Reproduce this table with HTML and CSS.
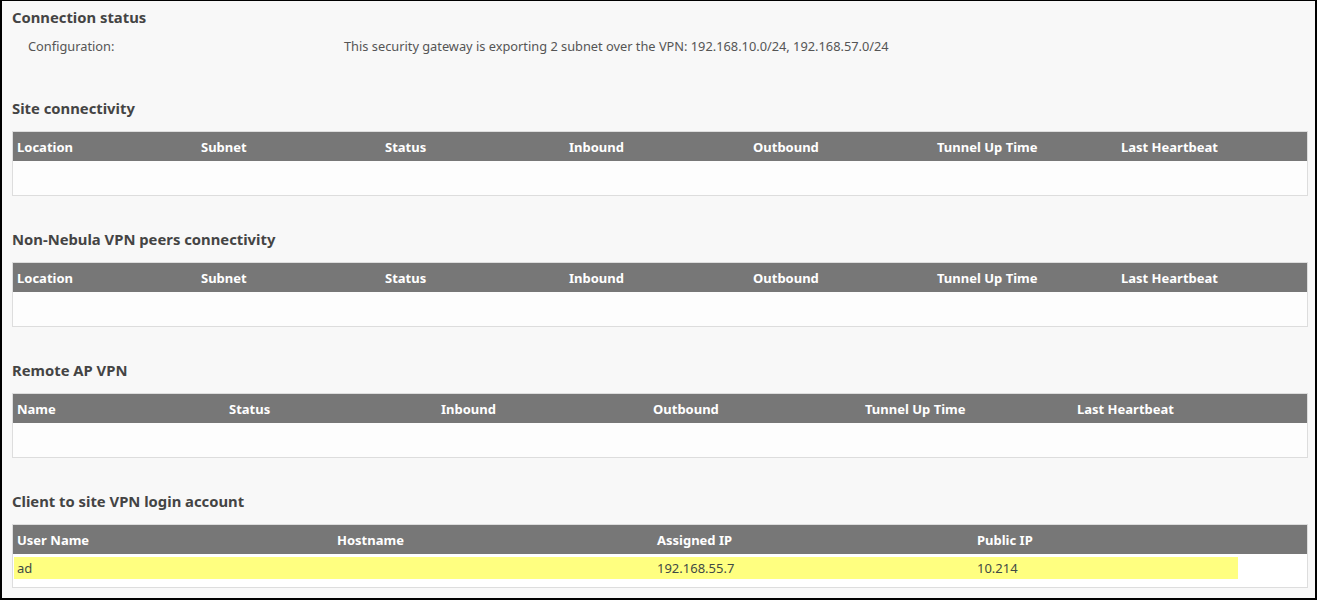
FILE: index.html
```html
<!DOCTYPE html>
<html>
<head>
<meta charset="utf-8">
<link rel="stylesheet" href="styles.css">
</head>
<body>
<div class="page">
  <section class="sec first">
    <h2 class="title">Connection status</h2>
    <div class="config">
      <span class="label">Configuration:</span>
      <span class="value">This security gateway is exporting 2 subnet over the VPN: 192.168.10.0/24, 192.168.57.0/24</span>
    </div>
  </section>

  <section class="sec">
    <h2 class="title">Site connectivity</h2>
    <div class="tbl">
      <div class="thead cols7">
        <span>Location</span><span>Subnet</span><span>Status</span><span>Inbound</span><span>Outbound</span><span>Tunnel Up Time</span><span>Last Heartbeat</span>
      </div>
      <div class="tbody empty"></div>
    </div>
  </section>

  <section class="sec">
    <h2 class="title">Non-Nebula VPN peers connectivity</h2>
    <div class="tbl">
      <div class="thead cols7">
        <span>Location</span><span>Subnet</span><span>Status</span><span>Inbound</span><span>Outbound</span><span>Tunnel Up Time</span><span>Last Heartbeat</span>
      </div>
      <div class="tbody empty"></div>
    </div>
  </section>

  <section class="sec">
    <h2 class="title">Remote AP VPN</h2>
    <div class="tbl">
      <div class="thead cols6">
        <span>Name</span><span>Status</span><span>Inbound</span><span>Outbound</span><span>Tunnel Up Time</span><span>Last Heartbeat</span>
      </div>
      <div class="tbody empty"></div>
    </div>
  </section>

  <section class="sec last">
    <h2 class="title">Client to site VPN login account</h2>
    <div class="tbl">
      <div class="thead cols4">
        <span>User Name</span><span>Hostname</span><span>Assigned IP</span><span>Public IP</span>
      </div>
      <div class="tbody rows">
        <div class="row hl cols4">
          <span>ad</span><span></span><span>192.168.55.7</span><span>10.214</span>
        </div>
      </div>
    </div>
  </section>
</div>
</body>
</html>
```

FILE: styles.css
```css
* { box-sizing: border-box; }
html, body {
  margin: 0;
  padding: 0;
  background: #fff;
}
body {
  font-family: "Noto Sans", "Open Sans", sans-serif;
  color: #444;
}
.page {
  width: 1317px;
  height: 600px;
  background: #f8f8f8;
  border-top: 1px solid #000;
  border-left: 2px solid #000;
  border-right: 2px solid #000;
  border-bottom: 2px solid #000;
  padding: 6px 7px 0 10px;
  overflow: hidden;
}
.title {
  margin: 0;
  font-size: 14.8px;
  line-height: 20px;
  font-weight: 700;
  color: #444;
}
.sec { margin-bottom: 33px; }
.sec.first { margin-bottom: 43px; }
.sec .title { margin-bottom: 13px; }
.sec.first .title { margin-bottom: 10px; }
.config {
  display: flex;
  font-size: 12.8px;
  line-height: 18px;
  color: #555;
}
.config .label {
  width: 332px;
  padding-left: 16px;
}
.tbl {
  border: 1px solid #ddd;
  background: #fdfdfd;
}
.thead {
  display: grid;
  height: 29px;
  align-items: center;
  background: #777;
  color: #fff;
  font-size: 13px;
  font-weight: 700;
}
.cols7 { grid-template-columns: repeat(7, 184px) 1fr; }
.cols6 { grid-template-columns: repeat(6, 212px) 1fr; }
.cols4 { grid-template-columns: 320px 320px 320px 264px 1fr; }
.thead span { padding-left: 4px; }
.tbody.empty { height: 34px; }
.tbody.rows {
  background: #fff;
  padding: 3px 0 8px 1px;
}
.row {
  display: grid;
  height: 22px;
  align-items: center;
  font-size: 13px;
  color: #3f4a45;
}
.row.cols4 { grid-template-columns: 320px 320px 320px 264px; }
.row.hl span { background: #ffff80; height: 22px; line-height: 22px; padding-left: 3px; }
```
